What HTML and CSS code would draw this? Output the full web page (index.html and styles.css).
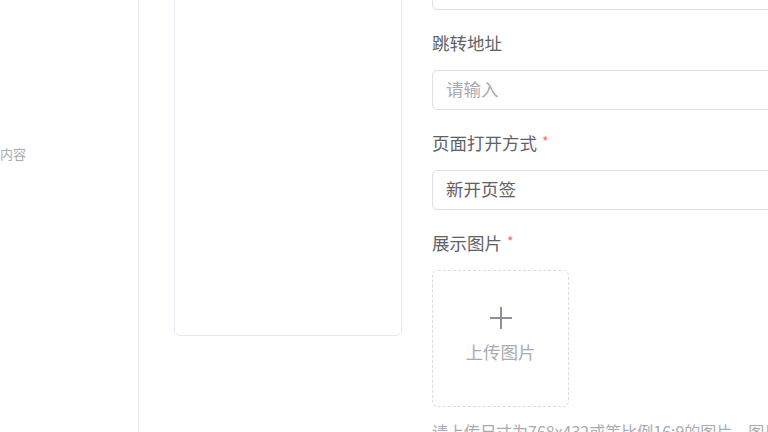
FILE: index.html
```html
<!doctype html>
<html lang="zh-CN">
  <head>
    <meta charset="utf-8">
    <title>编辑导航</title>
    <link rel="stylesheet" href="styles.css">
  </head>
  <body>
    <div class="page">
      <aside class="sidebar">
        <div class="side-item">页面内容</div>
      </aside>

      <main class="main">
        <div class="preview"></div>

        <form class="form">
          <div class="form-item">
            <div class="input"></div>
          </div>
          <div class="form-item">
            <label class="form-label">跳转地址</label>
            <div class="input"><span class="placeholder">请输入</span></div>
          </div>
          <div class="form-item">
            <label class="form-label required">页面打开方式</label>
            <div class="input"><span class="value">新开页签</span></div>
          </div>
          <div class="form-item">
            <label class="form-label required">展示图片</label>
            <div class="upload">
              <svg class="upload-icon" width="24" height="24" viewBox="0 0 24 24">
                <path d="M12 1v22M1 12h22" stroke="#8d9097" stroke-width="2" fill="none"/>
              </svg>
              <span class="upload-text">上传图片</span>
            </div>
            <p class="tip">请上传尺寸为768x432或等比例16:9的图片，图片大小不超过2M</p>
          </div>
        </form>
      </main>
    </div>
  </body>
</html>
```

FILE: styles.css
```css
html, body {
  margin: 0;
  height: 100%;
  overflow: hidden;
  background: #fff;
}

body {
  font-family: "Noto Sans CJK SC", "Noto Sans", sans-serif;
  color: #606266;
}

/* the view is scrolled a bit to the right and down */
.page {
  display: flex;
  margin: -80px 0 0 -62px;
  min-height: 700px;
}

.sidebar {
  width: 201px;
  flex-shrink: 0;
  box-sizing: border-box;
  border-right: 1px solid #e6e7f0;
  padding-top: 224px;
}

.side-item {
  padding-left: 36px;
  font-size: 13px;
  line-height: 20px;
  color: #a8abb2;
}

.main {
  display: flex;
  align-items: flex-start;
  padding-left: 35px;
}

.preview {
  width: 228px;
  height: 396px;
  margin-top: 20px;
  flex-shrink: 0;
  box-sizing: border-box;
  border: 1px solid #e6e7f2;
  border-radius: 6px;
}

.form {
  width: 420px;
  margin-left: 30px;
  padding-top: 50px;
}

.form-item {
  margin-bottom: 22px;
}

.form-label {
  display: block;
  height: 24px;
  font-size: 17.5px;
  line-height: 22px;
  margin-bottom: 14px;
  color: #606266;
}

.form-label.required::after {
  content: "*";
  color: #f56c6c;
  font-size: 14px;
  line-height: 0;
  margin-left: 5px;
  vertical-align: 3px;
}

.input {
  height: 40px;
  box-sizing: border-box;
  border: 1px solid #dcdfe6;
  border-radius: 5px;
  padding: 0 13px;
  display: flex;
  align-items: center;
  font-size: 17.5px;
  line-height: 20px;
}

.input span { margin-top: -3px; }
.input .value { color: #606266; }
.input .placeholder { color: #a8abb2; }

.upload {
  width: 137px;
  height: 137px;
  box-sizing: border-box;
  border: 1px dashed #d9dae2;
  border-radius: 6px;
  display: flex;
  flex-direction: column;
  align-items: center;
  padding-top: 35px;
  gap: 11px;
}

.upload-icon {
  display: block;
}

.upload-text {
  font-size: 17.5px;
  line-height: 22px;
  color: #a8abb2;
}

.tip {
  margin: 12px 0 0;
  font-size: 16px;
  line-height: 24px;
  color: #a8abb2;
  white-space: nowrap;
}
```
